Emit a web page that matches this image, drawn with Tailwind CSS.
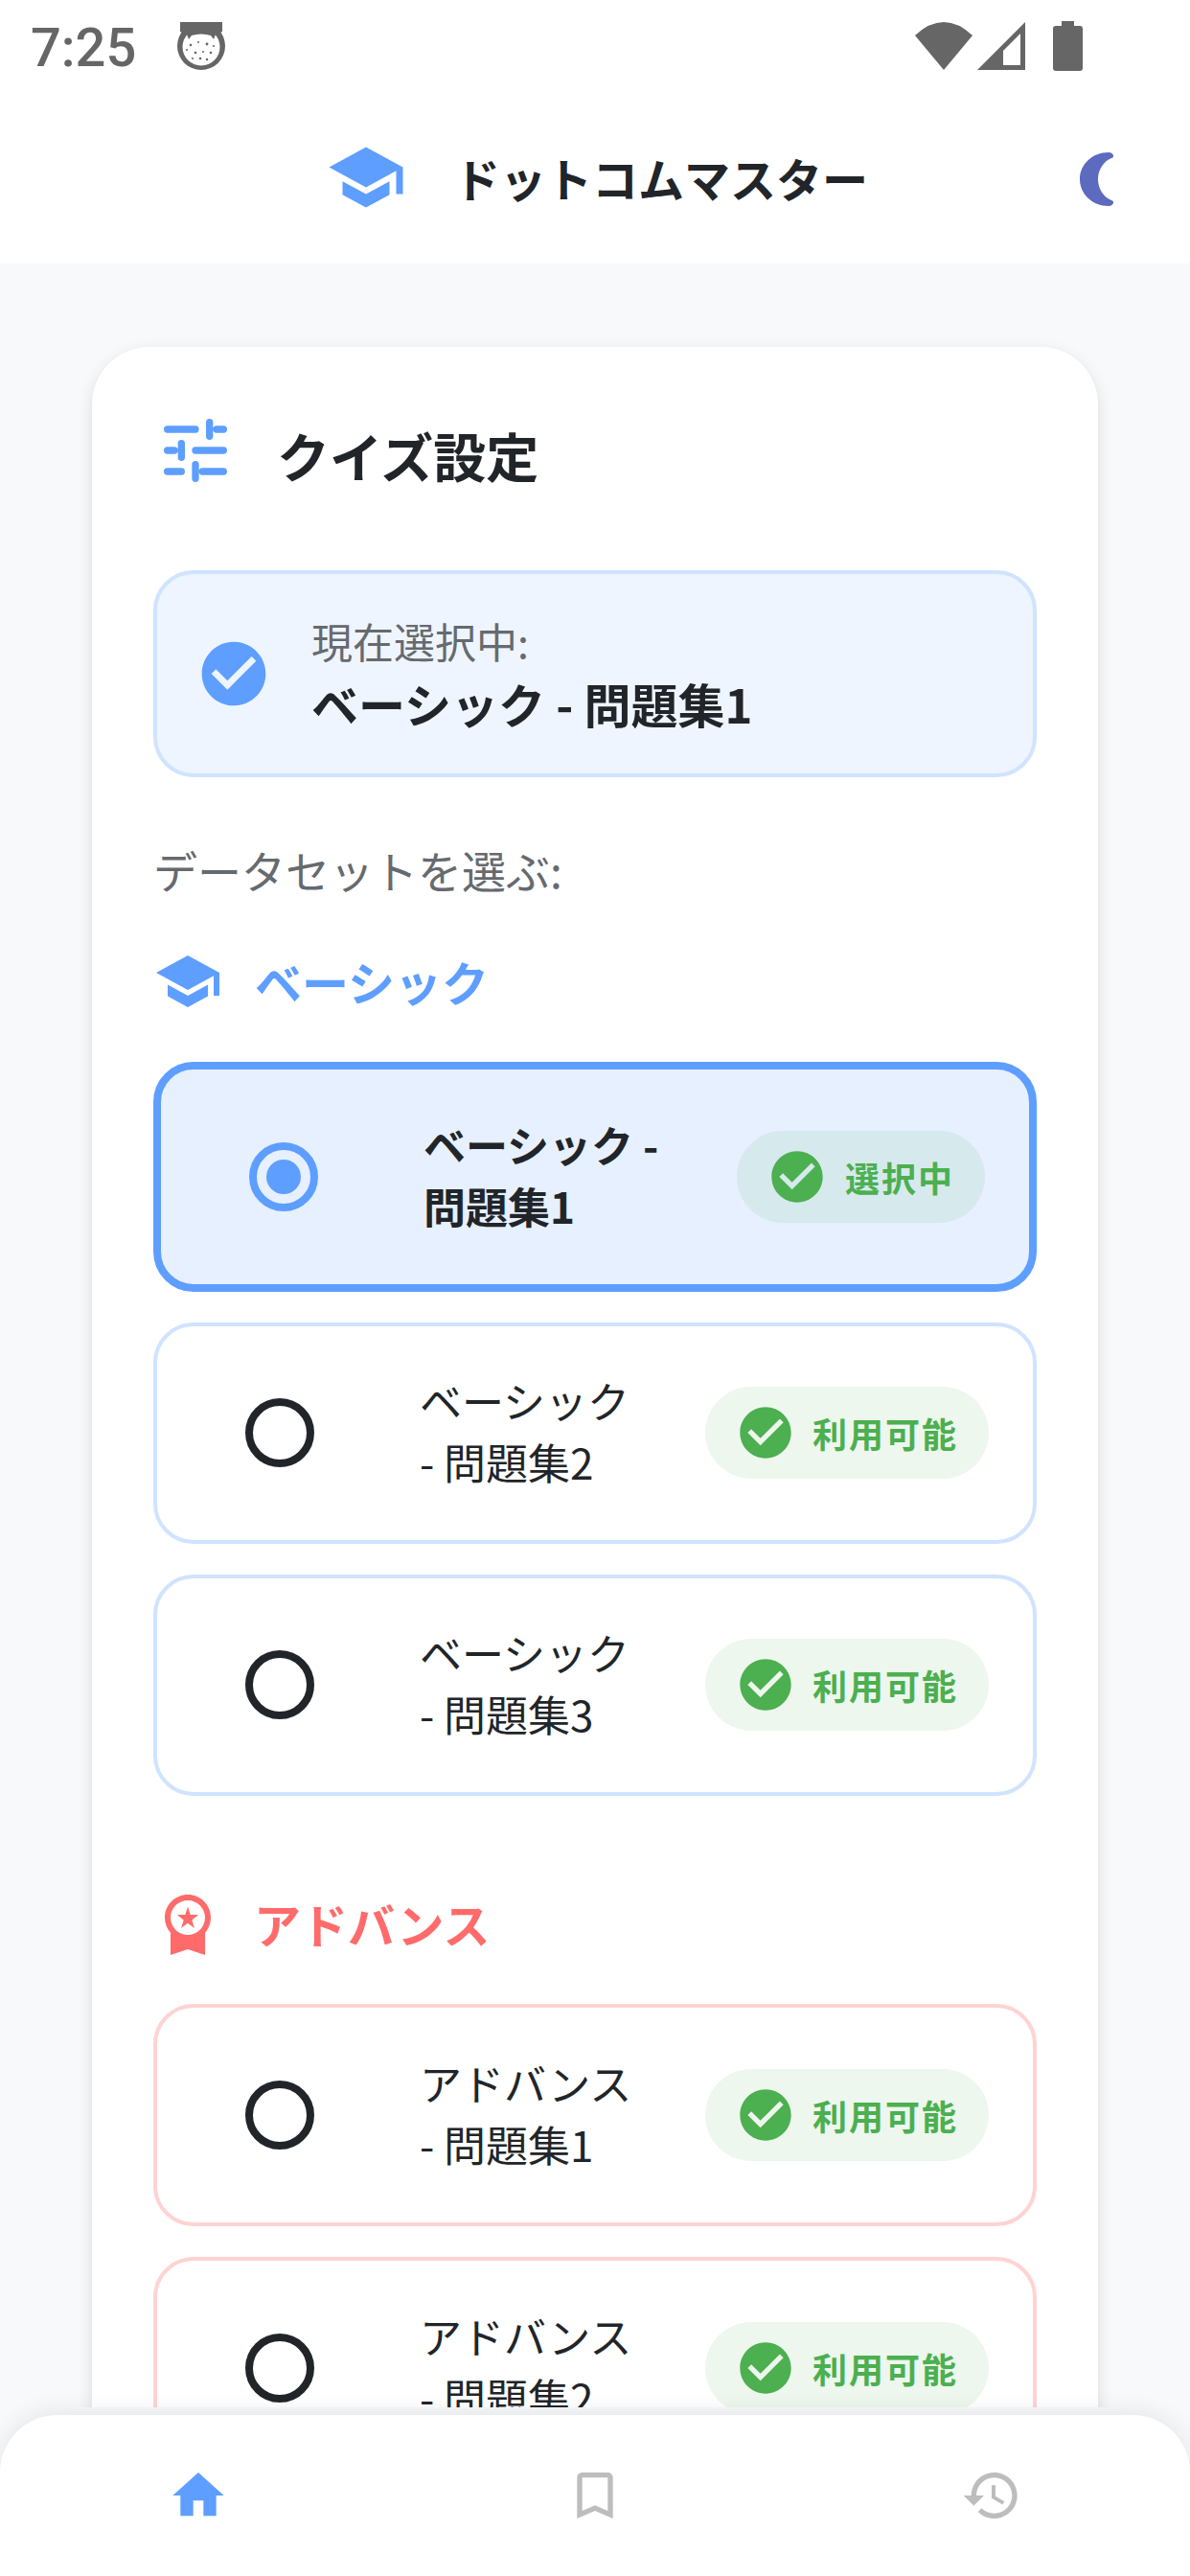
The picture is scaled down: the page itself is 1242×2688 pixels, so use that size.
<!DOCTYPE html>
<html lang="ja">
<head>
  <meta charset="UTF-8">
  <title>ドットコムマスター</title>
  <script src="https://cdn.jsdelivr.net/npm/@tailwindcss/browser@4"></script>
</head>
<body class="bg-[#f8f9fa]">
<div class="w-[1242px] h-[2688px] flex flex-col overflow-hidden bg-[#f8f9fa] font-['Noto_Sans_CJK_JP',sans-serif] text-[#212529]">

  <!-- status bar -->
  <div class="h-[96px] bg-white flex items-center justify-between pl-[32px] pr-[112px]">
    <div class="flex items-center">
      <span class="mt-[4px] font-['Roboto',sans-serif] text-[56px] font-medium leading-[92px] text-[#666666]">7:25</span>
      <svg class="ml-[43px]" width="50" height="50" viewBox="0 0 50 50">
        <circle cx="25" cy="25" r="25" fill="#666666"/>
        <circle cx="25" cy="26" r="19.5" fill="#ffffff"/>
        <path d="M3 0H47V10L40 13L38 18L35 14Q25 11 15 14L12 18L10 13L3 10Z" fill="#666666"/>
        <circle cx="14" cy="24" r="1.3" fill="#666666"/><circle cx="22" cy="21" r="1" fill="#666666"/><circle cx="31" cy="23" r="1.4" fill="#666666"/><circle cx="38" cy="25" r="1" fill="#666666"/><circle cx="10" cy="29" r="1" fill="#666666"/><circle cx="19" cy="32" r="1.3" fill="#666666"/><circle cx="27" cy="31" r="1" fill="#666666"/><circle cx="35" cy="32" r="1.3" fill="#666666"/><circle cx="16" cy="38" r="1" fill="#666666"/><circle cx="24" cy="38" r="1.3" fill="#666666"/><circle cx="31" cy="39" r="1.2" fill="#666666"/>
      </svg>
    </div>
    <div class="flex items-center">
      <svg width="60" height="50" viewBox="0 0 60 50"><path d="M30 50L0 14Q30 -14 60 14Z" fill="#666666"/></svg>
      <svg class="ml-[5px]" width="50" height="50" viewBox="0 0 50 50"><path fill-rule="evenodd" d="M0 50L50 0V50ZM45 12L27 30V45H45Z" fill="#666666"/></svg>
      <svg class="ml-[29px]" width="31" height="52" viewBox="0 0 31 52"><path d="M9 0H22V5H28Q31 5 31 8V49Q31 52 28 52H3Q0 52 0 49V8Q0 5 3 5H9Z" fill="#666666"/></svg>
    </div>
  </div>

  <!-- app bar -->
  <div class="h-[179px] bg-white flex items-center pl-[340px] pr-[79px]">
    <svg class="-mt-[1px]" width="84" height="84" viewBox="0 0 24 24" fill="#5e9eff"><path d="M5 13.18v4L12 21l7-3.82v-4L12 17l-7-3.82zM12 3L1 9l11 6 9-4.91V17h2V9L12 3z"/></svg>
    <span class="ml-[50px] text-[48px] leading-[70px] font-bold">ドットコムマスター</span>
    <svg class="ml-auto mt-[4px]" width="36" height="56" viewBox="0 0 36 56"><path d="M30 0C13 0 0 12.5 0 28C0 43.5 13 56 30 56C35 56 37 51 33 50C25 47 19 38 19 28C19 18 25 9 33 6C37 5 35 0 30 0Z" fill="#5c6bc0"/></svg>
  </div>

  <!-- scroll area -->
  <div class="h-[2241px] overflow-hidden px-[96px] pt-[87px]">
    <div class="rounded-[60px] bg-white shadow-[0_5px_16px_rgba(0,0,0,0.12)] px-[64px] pt-[64px] pb-[64px]">

      <div class="flex items-center h-[89px]">
        <svg width="88" height="88" viewBox="0 0 24 24" stroke="#5e9eff" stroke-width="2" stroke-linecap="round" fill="none">
          <path d="M4 6H12M16 4V8M18 6H20M4 12H6M8 10V14M12 12H20M4 18H8M12 16V20M14 18H20"/>
        </svg>
        <span class="ml-[41px] mt-[8px] text-[55px] leading-[78px] font-bold">クイズ設定</span>
      </div>

      <div class="mt-[80px] h-[216px] rounded-[42px] border-[4px] border-[#d0e3ff] bg-[#eef5ff] flex items-center pl-[40px]">
        <svg width="80" height="80" viewBox="0 0 24 24" fill="#5e9eff"><path d="M12 2C6.48 2 2 6.48 2 12s4.48 10 10 10 10-4.48 10-10S17.52 2 12 2zm-2 15l-5-5 1.41-1.41L10 14.17l7.59-7.59L19 8l-9 9z"/></svg>
        <div class="ml-[41px]">
          <div class="text-[43px] leading-[62px] text-[#666a6f]">現在選択中:</div>
          <div class="text-[49px] leading-[70px] font-bold">ベーシック - 問題集1</div>
        </div>
      </div>

      <div class="mt-[64px] text-[46px] leading-[65px] text-[#666a6f]">データセットを選ぶ:</div>

      <div class="mt-[48px] flex items-center h-[72px]">
        <svg width="72" height="72" viewBox="0 0 24 24" fill="#5e9eff"><path d="M5 13.18v4L12 21l7-3.82v-4L12 17l-7-3.82zM12 3L1 9l11 6 9-4.91V17h2V9L12 3z"/></svg>
        <span class="ml-[34px] text-[49px] leading-[70px] font-bold text-[#5e9eff]">ベーシック</span>
      </div>

      <div class="mt-[48px] flex flex-col gap-[32px]">
        <div class="h-[240px] rounded-[42px] border-[8px] border-[#5e9eff] bg-[#e6f0ff] flex items-center pl-[92px] pr-[46px]">
          <div class="w-[72px] h-[72px] rounded-full border-[8px] border-[#5e9eff] flex items-center justify-center">
            <div class="w-[36px] h-[36px] rounded-full bg-[#5e9eff]"></div>
          </div>
          <div class="ml-[110px] -mt-[4px] text-[44px] leading-[64px] font-bold">ベーシック -<br>問題集1</div>
          <div class="ml-auto h-[96px] rounded-full bg-[#4caf50]/10 flex items-center pl-[31px] pr-[32px] gap-[18px]">
            <svg width="64" height="64" viewBox="0 0 24 24" fill="#4caf50"><path d="M12 2C6.48 2 2 6.48 2 12s4.48 10 10 10 10-4.48 10-10S17.52 2 12 2zm-2 15l-5-5 1.41-1.41L10 14.17l7.59-7.59L19 8l-9 9z"/></svg>
            <span class="text-[36px] leading-[52px] font-bold tracking-[2px] text-[#4caf50]">選択中</span>
          </div>
        </div>

        <div class="h-[231px] rounded-[42px] border-[4px] border-[#d0e3ff] bg-white flex items-center pl-[92px] pr-[46px]">
          <div class="w-[72px] h-[72px] rounded-full border-[8px] border-[#212529]"></div>
          <div class="ml-[110px] -mt-[4px] text-[44px] leading-[64px]">ベーシック<br>- 問題集2</div>
          <div class="ml-auto h-[96px] rounded-full bg-[#4caf50]/10 flex items-center pl-[31px] pr-[32px] gap-[17px]">
            <svg width="64" height="64" viewBox="0 0 24 24" fill="#4caf50"><path d="M12 2C6.48 2 2 6.48 2 12s4.48 10 10 10 10-4.48 10-10S17.52 2 12 2zm-2 15l-5-5 1.41-1.41L10 14.17l7.59-7.59L19 8l-9 9z"/></svg>
            <span class="text-[36px] leading-[52px] font-bold tracking-[2px] text-[#4caf50]">利用可能</span>
          </div>
        </div>

        <div class="h-[231px] rounded-[42px] border-[4px] border-[#d0e3ff] bg-white flex items-center pl-[92px] pr-[46px]">
          <div class="w-[72px] h-[72px] rounded-full border-[8px] border-[#212529]"></div>
          <div class="ml-[110px] -mt-[4px] text-[44px] leading-[64px]">ベーシック<br>- 問題集3</div>
          <div class="ml-auto h-[96px] rounded-full bg-[#4caf50]/10 flex items-center pl-[31px] pr-[32px] gap-[17px]">
            <svg width="64" height="64" viewBox="0 0 24 24" fill="#4caf50"><path d="M12 2C6.48 2 2 6.48 2 12s4.48 10 10 10 10-4.48 10-10S17.52 2 12 2zm-2 15l-5-5 1.41-1.41L10 14.17l7.59-7.59L19 8l-9 9z"/></svg>
            <span class="text-[36px] leading-[52px] font-bold tracking-[2px] text-[#4caf50]">利用可能</span>
          </div>
        </div>
      </div>

      <div class="mt-[97px] flex items-center h-[72px]">
        <svg width="72" height="72" viewBox="0 0 24 24" fill="#ff6b6b"><path d="M9.68 13.69 12 11.93l2.31 1.76-.88-2.85L15.75 9h-2.84L12 6.19 11.09 9H8.25l2.31 1.84-.88 2.85zM20 10c0-4.42-3.58-8-8-8s-8 3.58-8 8c0 2.03.76 3.87 2 5.28V23l6-2 6 2v-7.72c1.24-1.41 2-3.25 2-5.28zM12 4c3.31 0 6 2.69 6 6s-2.69 6-6 6-6-2.69-6-6 2.69-6 6-6z"/></svg>
        <span class="ml-[33px] text-[49px] leading-[70px] font-bold text-[#ff6b6b]">アドバンス</span>
      </div>

      <div class="mt-[48px] flex flex-col gap-[32px]">
        <div class="h-[232px] rounded-[42px] border-[4px] border-[#ffd3d3] bg-white flex items-center pl-[92px] pr-[46px]">
          <div class="w-[72px] h-[72px] rounded-full border-[8px] border-[#212529]"></div>
          <div class="ml-[110px] -mt-[4px] text-[44px] leading-[64px]">アドバンス<br>- 問題集1</div>
          <div class="ml-auto h-[96px] rounded-full bg-[#4caf50]/10 flex items-center pl-[31px] pr-[32px] gap-[17px]">
            <svg width="64" height="64" viewBox="0 0 24 24" fill="#4caf50"><path d="M12 2C6.48 2 2 6.48 2 12s4.48 10 10 10 10-4.48 10-10S17.52 2 12 2zm-2 15l-5-5 1.41-1.41L10 14.17l7.59-7.59L19 8l-9 9z"/></svg>
            <span class="text-[36px] leading-[52px] font-bold tracking-[2px] text-[#4caf50]">利用可能</span>
          </div>
        </div>

        <div class="h-[232px] rounded-[42px] border-[4px] border-[#ffd3d3] bg-white flex items-center pl-[92px] pr-[46px]">
          <div class="w-[72px] h-[72px] rounded-full border-[8px] border-[#212529]"></div>
          <div class="ml-[110px] -mt-[4px] text-[44px] leading-[64px]">アドバンス<br>- 問題集2</div>
          <div class="ml-auto h-[96px] rounded-full bg-[#4caf50]/10 flex items-center pl-[31px] pr-[32px] gap-[17px]">
            <svg width="64" height="64" viewBox="0 0 24 24" fill="#4caf50"><path d="M12 2C6.48 2 2 6.48 2 12s4.48 10 10 10 10-4.48 10-10S17.52 2 12 2zm-2 15l-5-5 1.41-1.41L10 14.17l7.59-7.59L19 8l-9 9z"/></svg>
            <span class="text-[36px] leading-[52px] font-bold tracking-[2px] text-[#4caf50]">利用可能</span>
          </div>
        </div>
      </div>
    </div>
  </div>

  <!-- bottom nav -->
  <div class="relative flex-1 pt-[8px]">
    <div class="h-[168px] rounded-t-[60px] bg-white shadow-[0_-4px_24px_rgba(0,0,0,0.08)] grid grid-cols-3 justify-items-center pt-[52px]">
      <svg width="64" height="64" viewBox="0 0 24 24" fill="#5e9eff"><path d="M10 20v-6h4v6h5v-8h3L12 3 2 12h3v8z"/></svg>
      <svg width="64" height="64" viewBox="0 0 24 24" fill="#bdbdbd"><path d="M17 3H7c-1.1 0-2 .9-2 2v16l7-3 7 3V5c0-1.1-.9-2-2-2zm0 15l-5-2.18L7 18V5h10v13z"/></svg>
      <svg width="64" height="64" viewBox="0 0 24 24" fill="#bdbdbd"><path d="M13 3c-4.97 0-9 4.03-9 9H1l3.89 3.89.07.14L9 12H6c0-3.87 3.13-7 7-7s7 3.13 7 7-3.13 7-7 7c-1.93 0-3.68-.79-4.94-2.06l-1.42 1.42C8.27 19.99 10.51 21 13 21c4.97 0 9-4.03 9-9s-4.03-9-9-9zm-1 5v5l4.28 2.54.72-1.21-3.5-2.08V8H12z"/></svg>
    </div>
  </div>
</div>
</body>
</html>
